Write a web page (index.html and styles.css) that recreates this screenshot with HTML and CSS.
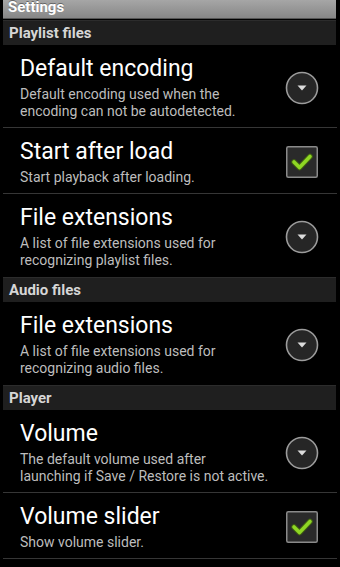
FILE: index.html
```html
<!DOCTYPE html>
<html lang="en">
  <head>
    <title>Settings</title>
    <link rel="stylesheet" href="styles.css">
  </head>

  <body>
    <div class="titlebar">Settings</div>

    <div class="group">Playlist files</div>
    <div class="pref">
      <div class="pref-text">
        <div class="pref-title">Default encoding</div>
        <div class="pref-summary">Default encoding used when the encoding can not be autodetected.</div>
      </div>
      <div class="pref-widget">
        <svg class="dropdown" width="34" height="34" viewBox="0 0 34 34">
          <circle cx="17" cy="17" r="15.5" fill="#262626" stroke="#9c9c9c" stroke-width="1.6"/>
          <polygon points="12.5,14.5 21.5,14.5 17,19.5" fill="#dcdcdc"/>
        </svg>
      </div>
    </div>
    <div class="pref">
      <div class="pref-text">
        <div class="pref-title">Start after load</div>
        <div class="pref-summary">Start playback after loading.</div>
      </div>
      <div class="pref-widget">
        <svg class="check" width="32" height="32" viewBox="0 0 32 32">
          <rect x="0.75" y="0.75" width="30.5" height="30.5" rx="1.5" fill="#2a2a2a" stroke="#8a8a8a" stroke-width="1.5"/>
          <path d="M8 16 L13.5 21.5 L24 10.5" fill="none" stroke="#3f5e12" stroke-width="5.5" stroke-linecap="round" stroke-linejoin="round"/>
          <path d="M8 16 L13.5 21.5 L24 10.5" fill="none" stroke="#8fd624" stroke-width="3.6" stroke-linecap="round" stroke-linejoin="round"/>
        </svg>
      </div>
    </div>
    <div class="pref last">
      <div class="pref-text">
        <div class="pref-title">File extensions</div>
        <div class="pref-summary">A list of file extensions used for recognizing playlist files.</div>
      </div>
      <div class="pref-widget">
        <svg class="dropdown" width="34" height="34" viewBox="0 0 34 34">
          <circle cx="17" cy="17" r="15.5" fill="#262626" stroke="#9c9c9c" stroke-width="1.6"/>
          <polygon points="12.5,14.5 21.5,14.5 17,19.5" fill="#dcdcdc"/>
        </svg>
      </div>
    </div>

    <div class="group">Audio files</div>
    <div class="pref last">
      <div class="pref-text">
        <div class="pref-title">File extensions</div>
        <div class="pref-summary">A list of file extensions used for recognizing audio files.</div>
      </div>
      <div class="pref-widget">
        <svg class="dropdown" width="34" height="34" viewBox="0 0 34 34">
          <circle cx="17" cy="17" r="15.5" fill="#262626" stroke="#9c9c9c" stroke-width="1.6"/>
          <polygon points="12.5,14.5 21.5,14.5 17,19.5" fill="#dcdcdc"/>
        </svg>
      </div>
    </div>

    <div class="group">Player</div>
    <div class="pref">
      <div class="pref-text">
        <div class="pref-title">Volume</div>
        <div class="pref-summary">The default volume used after<br>launching if Save / Restore is not active.</div>
      </div>
      <div class="pref-widget">
        <svg class="dropdown" width="34" height="34" viewBox="0 0 34 34">
          <circle cx="17" cy="17" r="15.5" fill="#262626" stroke="#9c9c9c" stroke-width="1.6"/>
          <polygon points="12.5,14.5 21.5,14.5 17,19.5" fill="#dcdcdc"/>
        </svg>
      </div>
    </div>
    <div class="pref">
      <div class="pref-text">
        <div class="pref-title">Volume slider</div>
        <div class="pref-summary">Show volume slider.</div>
      </div>
      <div class="pref-widget">
        <svg class="check" width="32" height="32" viewBox="0 0 32 32">
          <rect x="0.75" y="0.75" width="30.5" height="30.5" rx="1.5" fill="#2a2a2a" stroke="#8a8a8a" stroke-width="1.5"/>
          <path d="M8 16 L13.5 21.5 L24 10.5" fill="none" stroke="#3f5e12" stroke-width="5.5" stroke-linecap="round" stroke-linejoin="round"/>
          <path d="M8 16 L13.5 21.5 L24 10.5" fill="none" stroke="#8fd624" stroke-width="3.6" stroke-linecap="round" stroke-linejoin="round"/>
        </svg>
      </div>
    </div>
  </body>
</html>
```

FILE: styles.css
```css
body {
  margin: 0;
  background-color: black;
  font-family: Roboto, "Open Sans", sans-serif;
  height: 100vh;
  overflow: hidden;
}

.titlebar {
  height: 18px;
  margin: 0 4px 1px 3px;
  padding-left: 5px;
  background: linear-gradient(#a6a6a6, #878787);
  border-bottom: 1px solid #555;
  color: white;
  font-size: 15px;
  font-weight: bold;
  line-height: 14px;
  text-shadow: 0 -1px 0 #666;
  overflow: hidden;
}

.group {
  height: 24px;
  margin: 0 4px 0 3px;
  padding-left: 6px;
  background-color: #1f1f1f;
  border-top: 1px solid #2c2c2c;
  color: #d6d6d6;
  font-size: 15px;
  font-weight: bold;
  line-height: 25px;
}

.pref {
  display: flex;
  align-items: center;
  min-height: 48px;
  margin: 0 3px;
  padding: 10px 0 7px 17px;
  border-bottom: 1px solid #363636;
}
.pref.last {
  border-bottom-color: black;
}

.pref-text {
  flex: 1;
  padding-right: 10px;
}

.pref-title {
  color: white;
  font-size: 23px;
  line-height: 28px;
  white-space: nowrap;
}

.pref-summary {
  margin-top: 3px;
  color: #bdbdbd;
  font-size: 14px;
  line-height: 17px;
}

.pref-widget {
  width: 34px;
  margin-right: 18px;
  display: flex;
  justify-content: center;
}
```
